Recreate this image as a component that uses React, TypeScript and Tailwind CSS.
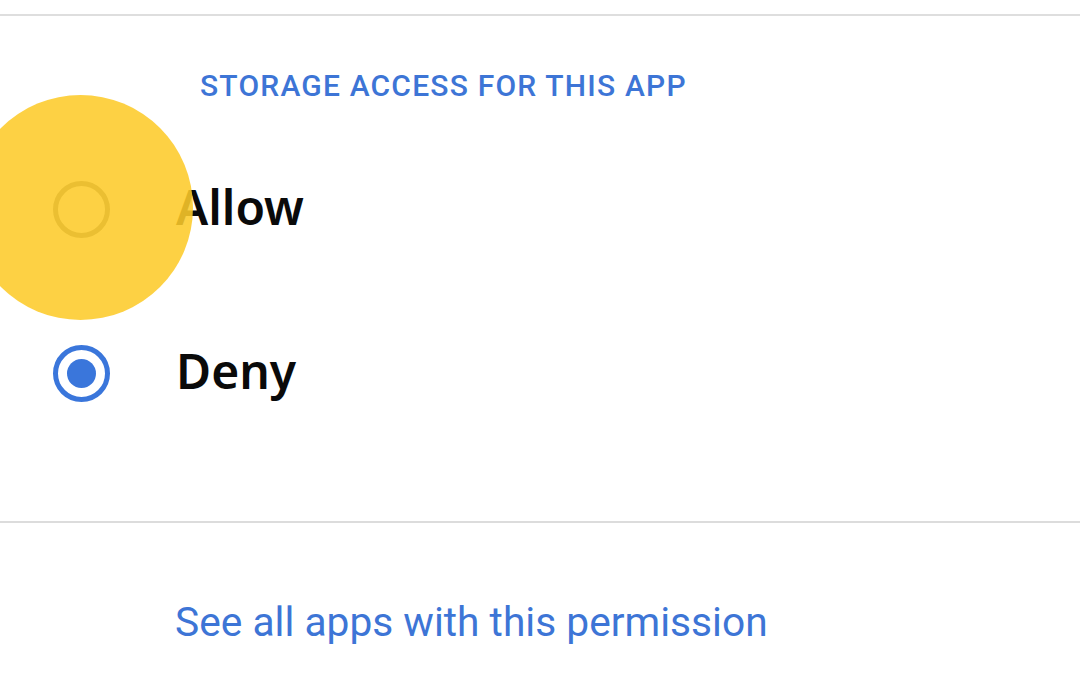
import React from "react";

export default function App() {
  return (
    <div className="relative w-[1080px] h-[698px] overflow-hidden bg-white" style={{ fontFamily: "Roboto, 'Noto Sans', sans-serif" }}>
      <div className="h-[14px]" />
      <div className="h-[2px] bg-[#dedede]" />
      <div className="pl-[200px] pt-[55px] h-[111px]">
        <div className="text-[30px] font-medium leading-none text-[#3d75d6] tracking-[1.2px]">STORAGE ACCESS FOR THIS APP</div>
      </div>
      <div className="flex items-center h-[164px]">
        <div className="w-[176px] flex justify-center pr-[14px]">
          <div className="w-[57px] h-[57px] rounded-full border-[5px] border-[#6b6b6b]" />
        </div>
        <div className="text-[48px] font-semibold text-[#0a0a0a] leading-none pb-[4px]" style={{ fontFamily: "'Noto Sans', sans-serif" }}>Allow</div>
      </div>
      <div className="flex items-center h-[164px]">
        <div className="w-[176px] flex justify-center pr-[14px]">
          <div className="w-[57px] h-[57px] rounded-full border-[5px] border-[#3a76db] flex items-center justify-center">
            <div className="w-[29px] h-[29px] rounded-full bg-[#3a76db]" />
          </div>
        </div>
        <div className="text-[48px] font-semibold text-[#0a0a0a] leading-none pb-[4px]" style={{ fontFamily: "'Noto Sans', sans-serif" }}>Deny</div>
      </div>
      <div className="h-[66px]" />
      <div className="h-[2px] bg-[#dcdcdc]" />
      <div className="pl-[175px] pt-[79px]">
        <div className="text-[40.7px] text-[#3d75d6] leading-none">See all apps with this permission</div>
      </div>
      <div className="absolute left-[-32px] top-[95px] w-[225px] h-[225px] rounded-full bg-[#fdcb2a] opacity-[0.88]" />
    </div>
  );
}
